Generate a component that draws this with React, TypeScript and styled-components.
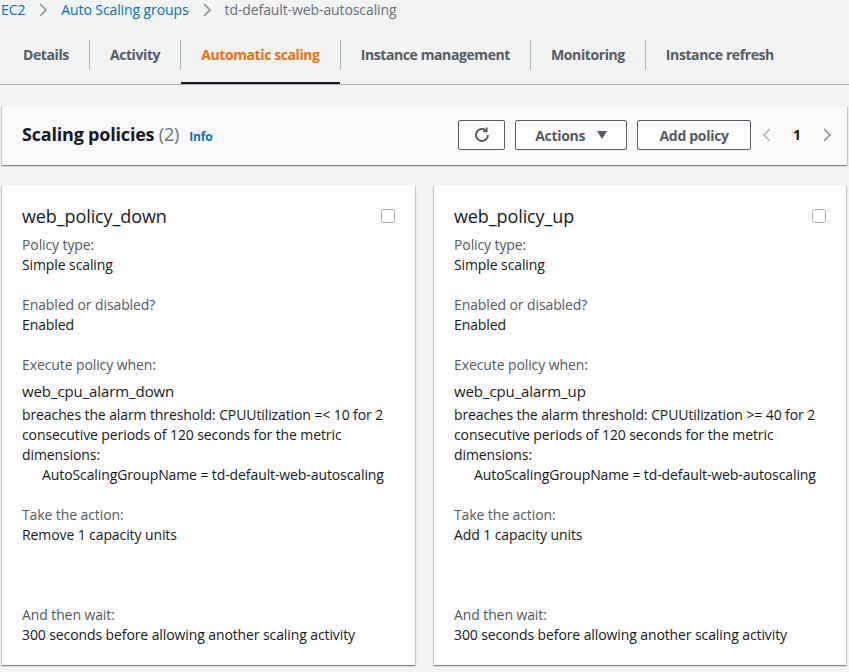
import * as React from "react"
import styled, { createGlobalStyle } from "styled-components"

const GlobalStyle = createGlobalStyle`
  body {
    margin: 0;
    background: #f2f3f3;
    font-family: "Open Sans", "Liberation Sans", sans-serif;
    font-size: 14px;
    line-height: 20px;
    letter-spacing: -0.1px;
    color: #16191f;
  }
`

const Page = styled.div`
  width: 849px;
  height: 672px;
  overflow: hidden;
`

const Breadcrumbs = styled.nav`
  display: flex;
  align-items: center;
  gap: 12px;
  height: 20px;
  padding-left: 1px;
`

const Crumb = styled.span<{ $current?: boolean }>`
  color: ${(p) => (p.$current ? "#687078" : "#0073bb")};
`

const TabList = styled.div`
  display: flex;
  align-items: center;
  margin-top: 6px;
  padding-left: 3px;
  border-bottom: 1px solid #aab7b8;
`

const Tab = styled.div<{ $active?: boolean }>`
  padding: 19px 20px 17px;
  font-weight: 700;
  letter-spacing: -0.4px;
  color: ${(p) => (p.$active ? "#ec7211" : "#545b64")};
  border-bottom: 2px solid ${(p) => (p.$active ? "#16191f" : "transparent")};
`

const TabDivider = styled.span`
  width: 1px;
  height: 30px;
  background: #aab7b8;
`

const Content = styled.div`
  padding: 21px 2px 0 2px;
`

const Panel = styled.div`
  background: #fafafa;
  box-shadow: 0 1px 1px 0 rgba(0, 28, 36, 0.3), 1px 1px 1px 0 rgba(0, 28, 36, 0.15),
    -1px 1px 1px 0 rgba(0, 28, 36, 0.15);
`

const PanelHeader = styled.div`
  display: flex;
  align-items: center;
  justify-content: space-between;
  padding: 14px 14px 15px 20px;
`

const Heading = styled.h2`
  margin: 0;
  font-size: 18px;
  line-height: 22px;
  font-weight: 700;
  letter-spacing: -0.2px;
  color: #16191f;
`

const Count = styled.span`
  font-weight: 400;
  color: #687078;
`

const InfoLink = styled.span`
  margin-left: 10px;
  font-size: 12px;
  font-weight: 700;
  letter-spacing: -0.1px;
  color: #0073bb;
`

const Controls = styled.div`
  display: flex;
  align-items: center;
  gap: 10px;
`

const Button = styled.button<{ $width: number }>`
  display: inline-flex;
  align-items: center;
  justify-content: center;
  gap: 12px;
  width: ${(p) => p.$width}px;
  height: 30px;
  padding: 0;
  background: #fff;
  border: 1px solid #545b64;
  border-radius: 2px;
  font-family: inherit;
  font-size: 14px;
  font-weight: 700;
  letter-spacing: -0.3px;
  color: #545b64;
`

const Pager = styled.div`
  display: flex;
  align-items: center;
  gap: 20px;
`

const PageNumber = styled.span`
  font-weight: 700;
  color: #16191f;
`

const Cards = styled.div`
  display: grid;
  grid-template-columns: 413px 412px;
  gap: 19px;
  margin-top: 20px;
`

const Card = styled.div`
  background: #fff;
  padding: 20px;
  box-shadow: 0 1px 1px 0 rgba(0, 28, 36, 0.3), 1px 1px 1px 0 rgba(0, 28, 36, 0.15),
    -1px 1px 1px 0 rgba(0, 28, 36, 0.15);
`

const CardTitleRow = styled.div`
  display: flex;
  align-items: center;
  justify-content: space-between;
`

const CardTitle = styled.h3`
  margin: 0;
  font-size: 18px;
  line-height: 22px;
  font-weight: 400;
`

const Checkbox = styled.span`
  width: 12px;
  height: 12px;
  border: 1px solid #aab7b8;
  border-radius: 2px;
`

const Section = styled.section<{ $gap?: number }>`
  margin-top: ${(p) => p.$gap ?? 20}px;
`

const Label = styled.div`
  color: #545b64;
`

const Value = styled.div``

const AlarmName = styled.div`
  margin-top: 5px;
  font-size: 15px;
  line-height: 22px;
`

const AlarmText = styled.p`
  margin: 3px 0 0;
`

const Dimension = styled.div`
  padding-left: 20px;
`

const Chevron = ({ dir, color }: { dir: "left" | "right"; color: string }) => (
  <svg width="12" height="16" viewBox="0 0 12 16" fill="none" stroke={color} strokeWidth="1.6">
    {dir === "right" ? <polyline points="3,2 9,8 3,14" /> : <polyline points="9,2 3,8 9,14" />}
  </svg>
)

const RefreshIcon = () => (
  <svg width="16" height="16" viewBox="0 0 16 16" fill="none" stroke="#545b64" strokeWidth="2">
    <path d="M14 8A6 6 0 1 1 12.24 3.76" />
    <polyline points="12.6,0.6 12.6,4.2 9,4.2" />
  </svg>
)

const Caret = () => (
  <svg width="10" height="8" viewBox="0 0 10 8" fill="#545b64">
    <polygon points="0,0 10,0 5,8" />
  </svg>
)

type Policy = {
  name: string
  alarm: string
  threshold: string
  action: string
}

const policies: Policy[] = [
  {
    name: "web_policy_down",
    alarm: "web_cpu_alarm_down",
    threshold: "CPUUtilization =< 10",
    action: "Remove 1 capacity units",
  },
  {
    name: "web_policy_up",
    alarm: "web_cpu_alarm_up",
    threshold: "CPUUtilization >= 40",
    action: "Add 1 capacity units",
  },
]

const PolicyCard = ({ policy }: { policy: Policy }) => (
  <Card>
    <CardTitleRow>
      <CardTitle>{policy.name}</CardTitle>
      <Checkbox />
    </CardTitleRow>
    <Section $gap={8}>
      <Label>Policy type:</Label>
      <Value>Simple scaling</Value>
    </Section>
    <Section>
      <Label>Enabled or disabled?</Label>
      <Value>Enabled</Value>
    </Section>
    <Section>
      <Label>Execute policy when:</Label>
      <AlarmName>{policy.alarm}</AlarmName>
      <AlarmText>
        {`breaches the alarm threshold: ${policy.threshold} for 2 consecutive periods of 120 seconds for the metric dimensions:`}
      </AlarmText>
      <Dimension>AutoScalingGroupName = td-default-web-autoscaling</Dimension>
    </Section>
    <Section>
      <Label>Take the action:</Label>
      <Value>{policy.action}</Value>
    </Section>
    <Section $gap={60}>
      <Label>And then wait:</Label>
      <Value>300 seconds before allowing another scaling activity</Value>
    </Section>
  </Card>
)

const tabs = [
  "Details",
  "Activity",
  "Automatic scaling",
  "Instance management",
  "Monitoring",
  "Instance refresh",
]

export default function App() {
  return (
    <Page>
      <GlobalStyle />
      <Breadcrumbs>
        <Crumb>EC2</Crumb>
        <Chevron dir="right" color="#879596" />
        <Crumb>Auto Scaling groups</Crumb>
        <Chevron dir="right" color="#879596" />
        <Crumb $current>td-default-web-autoscaling</Crumb>
      </Breadcrumbs>
      <TabList>
        {tabs.map((t, i) => (
          <React.Fragment key={t}>
            {i > 0 && <TabDivider />}
            <Tab $active={t === "Automatic scaling"}>{t}</Tab>
          </React.Fragment>
        ))}
      </TabList>
      <Content>
        <Panel>
          <PanelHeader>
            <Heading>
              Scaling policies <Count>(2)</Count>
              <InfoLink>Info</InfoLink>
            </Heading>
            <Controls>
              <Button $width={47}>
                <RefreshIcon />
              </Button>
              <Button $width={112}>
                Actions <Caret />
              </Button>
              <Button $width={114}>Add policy</Button>
              <Pager>
                <Chevron dir="left" color="#aab7b8" />
                <PageNumber>1</PageNumber>
                <Chevron dir="right" color="#879596" />
              </Pager>
            </Controls>
          </PanelHeader>
        </Panel>
        <Cards>
          {policies.map((p) => (
            <PolicyCard key={p.name} policy={p} />
          ))}
        </Cards>
      </Content>
    </Page>
  )
}
